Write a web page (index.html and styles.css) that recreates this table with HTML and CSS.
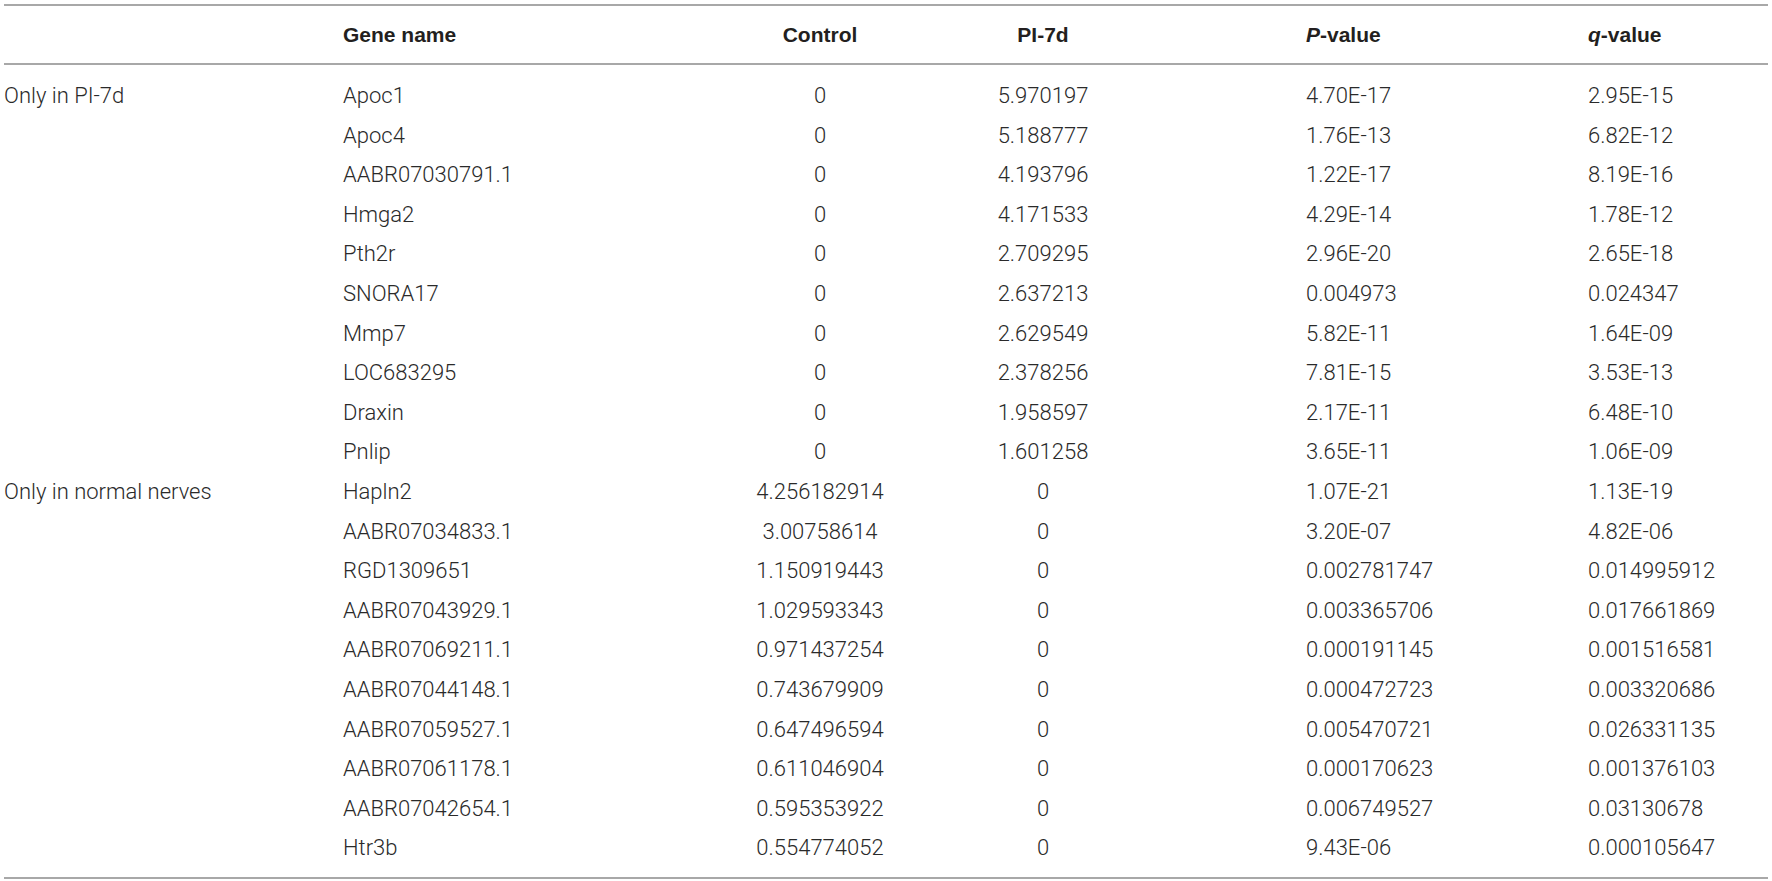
FILE: index.html
```html
<!DOCTYPE html>
<html lang="en">
<head>
<meta charset="utf-8">
<title>Genes</title>
<link rel="stylesheet" href="styles.css">
</head>
<body>
<table class="genes">
  <colgroup>
    <col class="c1"><col class="c2"><col class="c3"><col class="c4"><col class="c5"><col class="c6">
  </colgroup>
  <thead>
    <tr>
      <th class="l"></th>
      <th class="l">Gene name</th>
      <th class="m">Control</th>
      <th class="m">PI-7d</th>
      <th class="l p5"><i>P</i>-value</th>
      <th class="l"><i>q</i>-value</th>
    </tr>
  </thead>
  <tbody>
    <tr class="first"><td>Only in PI-7d</td><td>Apoc1</td><td class="m">0</td><td class="m">5.970197</td><td class="p5">4.70E-17</td><td>2.95E-15</td></tr>
    <tr><td></td><td>Apoc4</td><td class="m">0</td><td class="m">5.188777</td><td class="p5">1.76E-13</td><td>6.82E-12</td></tr>
    <tr><td></td><td>AABR07030791.1</td><td class="m">0</td><td class="m">4.193796</td><td class="p5">1.22E-17</td><td>8.19E-16</td></tr>
    <tr><td></td><td>Hmga2</td><td class="m">0</td><td class="m">4.171533</td><td class="p5">4.29E-14</td><td>1.78E-12</td></tr>
    <tr><td></td><td>Pth2r</td><td class="m">0</td><td class="m">2.709295</td><td class="p5">2.96E-20</td><td>2.65E-18</td></tr>
    <tr><td></td><td>SNORA17</td><td class="m">0</td><td class="m">2.637213</td><td class="p5">0.004973</td><td>0.024347</td></tr>
    <tr><td></td><td>Mmp7</td><td class="m">0</td><td class="m">2.629549</td><td class="p5">5.82E-11</td><td>1.64E-09</td></tr>
    <tr><td></td><td>LOC683295</td><td class="m">0</td><td class="m">2.378256</td><td class="p5">7.81E-15</td><td>3.53E-13</td></tr>
    <tr><td></td><td>Draxin</td><td class="m">0</td><td class="m">1.958597</td><td class="p5">2.17E-11</td><td>6.48E-10</td></tr>
    <tr><td></td><td>Pnlip</td><td class="m">0</td><td class="m">1.601258</td><td class="p5">3.65E-11</td><td>1.06E-09</td></tr>
    <tr><td>Only in normal nerves</td><td>Hapln2</td><td class="m">4.256182914</td><td class="m">0</td><td class="p5">1.07E-21</td><td>1.13E-19</td></tr>
    <tr><td></td><td>AABR07034833.1</td><td class="m">3.00758614</td><td class="m">0</td><td class="p5">3.20E-07</td><td>4.82E-06</td></tr>
    <tr><td></td><td>RGD1309651</td><td class="m">1.150919443</td><td class="m">0</td><td class="p5">0.002781747</td><td>0.014995912</td></tr>
    <tr><td></td><td>AABR07043929.1</td><td class="m">1.029593343</td><td class="m">0</td><td class="p5">0.003365706</td><td>0.017661869</td></tr>
    <tr><td></td><td>AABR07069211.1</td><td class="m">0.971437254</td><td class="m">0</td><td class="p5">0.000191145</td><td>0.001516581</td></tr>
    <tr><td></td><td>AABR07044148.1</td><td class="m">0.743679909</td><td class="m">0</td><td class="p5">0.000472723</td><td>0.003320686</td></tr>
    <tr><td></td><td>AABR07059527.1</td><td class="m">0.647496594</td><td class="m">0</td><td class="p5">0.005470721</td><td>0.026331135</td></tr>
    <tr><td></td><td>AABR07061178.1</td><td class="m">0.611046904</td><td class="m">0</td><td class="p5">0.000170623</td><td>0.001376103</td></tr>
    <tr><td></td><td>AABR07042654.1</td><td class="m">0.595353922</td><td class="m">0</td><td class="p5">0.006749527</td><td>0.03130678</td></tr>
    <tr class="last"><td></td><td>Htr3b</td><td class="m">0.554774052</td><td class="m">0</td><td class="p5">9.43E-06</td><td>0.000105647</td></tr>
  </tbody>
</table>
</body>
</html>
```

FILE: styles.css
```css
html, body {
  margin: 0;
  padding: 0;
  background: #ffffff;
}

.genes {
  margin: 4px 0 0 4px;
  width: 1764px;
  table-layout: fixed;
  border-collapse: collapse;
  border-top: 2px solid #a8a8a8;
  border-bottom: 2px solid #a8a8a8;
  color: #2a2a2a;
  font-family: Roboto, "Liberation Sans", sans-serif;
  font-weight: 300;
  font-size: 22px;
}

.c1 { width: 339px; }
.c2 { width: 357px; }
.c3 { width: 240px; }
.c4 { width: 206px; }
.c5 { width: 442px; }
.c6 { width: 180px; }

.genes thead th {
  height: 57px;
  padding: 0;
  border-bottom: 2px solid #a8a8a8;
  font-family: "Liberation Sans", Arial, sans-serif;
  font-weight: 700;
  font-size: 21px;
  color: #231f20;
  vertical-align: middle;
}

.genes td {
  height: 39.6px;
  padding: 0;
  line-height: 39.6px;
  white-space: nowrap;
  text-align: left;
  vertical-align: middle;
}

.genes tr.first td { padding-top: 11px; }
.genes tr.last td { padding-bottom: 9px; }

.l { text-align: left; }
.genes .m { text-align: center; }
.p5 { padding-left: 160px !important; }
```
